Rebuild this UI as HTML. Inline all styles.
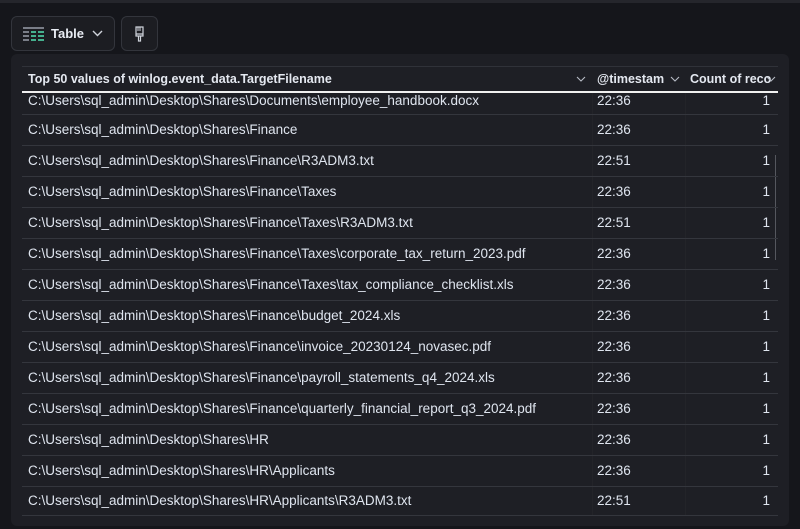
<!DOCTYPE html>
<html><head><meta charset="utf-8"><style>
*{box-sizing:border-box;margin:0;padding:0}
body{width:800px;height:529px;background:#15161b;font-family:"Liberation Sans",sans-serif;color:#dfe5ef;overflow:hidden;position:relative}
.topline{position:absolute;left:0;top:0;width:800px;height:3px;background:#25262c}
.btn{position:absolute;top:16px;height:35px;border:1px solid #33353c;border-radius:6px;background:#1c1d22}
.b1{left:11px;width:104px}
.b2{left:121px;width:37px}
.panel{position:absolute;left:11px;top:54px;width:778px;height:472px;background:#1e1f25;border-radius:6px}
.hd{position:absolute;top:66px;height:27px;border-top:1px solid #303239;border-bottom:2px solid #f0f0f0;left:22px;width:756px;font-weight:bold;font-size:12.5px;color:#e4e8f0}
.hd span{position:absolute;top:5px}
.hd svg{position:absolute;top:9px}
.row{position:absolute;left:22px;width:756px;border-bottom:1px solid #34363d;font-size:13.5px;color:#dfe5ef}
.row span{position:absolute}
.vl{position:absolute;top:93px;height:422px;width:1px;background:#232429}
</style></head><body>
<div class="topline"></div>
<div class="btn b1">
<svg style="position:absolute;left:11px;top:10px" width="21" height="14" viewBox="0 0 21 14">
<rect x="0" y="0" width="21" height="2" fill="#7a7e88"/>
<g fill="#7a7e88"><rect x="0" y="4" width="6" height="2"/><rect x="0" y="8" width="6" height="2"/><rect x="0" y="12" width="6" height="2"/></g>
<g fill="#45b08e"><rect x="8" y="4" width="5" height="2"/><rect x="15" y="4" width="6" height="2"/><rect x="8" y="8" width="5" height="2"/><rect x="15" y="8" width="6" height="2"/><rect x="8" y="12" width="5" height="2"/><rect x="15" y="12" width="6" height="2"/></g>
</svg>
<span style="position:absolute;left:39px;top:9px;font-weight:bold;font-size:13px;color:#e8ecf3">Table</span>
<svg style="position:absolute;left:80px;top:13px" width="11" height="7" viewBox="0 0 11 7"><path d="M1 1 L5.5 5.5 L10 1" stroke="#d0d4dc" stroke-width="1.4" fill="none"/></svg>
</div>
<div class="btn b2">
<svg style="position:absolute;left:12px;top:9px" width="11" height="16" viewBox="0 0 11 16"><path d="M2 1 H9 V8 H2 Z M2 8 H9 V10 H2 Z M4.5 10 V15 H6.5 V10" stroke="#d0d4dc" stroke-width="1.2" fill="none"/><path d="M4 1 V5 M6 1 V5" stroke="#d0d4dc" stroke-width="1"/></svg>
</div>
<div class="panel"></div>
<div class="hd">
<span style="left:6px">Top 50 values of winlog.event_data.TargetFilename</span>
<svg style="left:554px" width="10" height="6" viewBox="0 0 10 6"><path d="M1 1 L5 5 L9 1" stroke="#b8bcc6" stroke-width="1.1" fill="none"/></svg>
<span style="left:575px">@timestam</span>
<svg style="left:648px" width="10" height="6" viewBox="0 0 10 6"><path d="M1 1 L5 5 L9 1" stroke="#b8bcc6" stroke-width="1.1" fill="none"/></svg>
<span style="left:668px;width:82px;overflow:hidden;white-space:nowrap">Count of records</span>
<svg style="left:744px" width="10" height="6" viewBox="0 0 10 6"><path d="M1 1 L5 5 L9 1" stroke="#b8bcc6" stroke-width="1.1" fill="none"/></svg>
</div>
<div class="vl" style="left:592px"></div>
<div class="vl" style="left:685px"></div>
<div style="position:absolute;left:775px;top:155px;width:1px;height:105px;background:#55575e"></div>
<div class="row" style="top:93px;height:22px"><span style="left:6px;top:0">C:\Users\sql_admin\Desktop\Shares\Documents\employee_handbook.docx</span><span style="left:575px;top:0">22:36</span><span style="right:8px;top:0">1</span></div>
<div class="row" style="top:115px;height:31px"><span style="left:6px;top:7px">C:\Users\sql_admin\Desktop\Shares\Finance</span><span style="left:575px;top:7px">22:36</span><span style="right:8px;top:7px">1</span></div>
<div class="row" style="top:146px;height:31px"><span style="left:6px;top:7px">C:\Users\sql_admin\Desktop\Shares\Finance\R3ADM3.txt</span><span style="left:575px;top:7px">22:51</span><span style="right:8px;top:7px">1</span></div>
<div class="row" style="top:177px;height:31px"><span style="left:6px;top:7px">C:\Users\sql_admin\Desktop\Shares\Finance\Taxes</span><span style="left:575px;top:7px">22:36</span><span style="right:8px;top:7px">1</span></div>
<div class="row" style="top:208px;height:31px"><span style="left:6px;top:7px">C:\Users\sql_admin\Desktop\Shares\Finance\Taxes\R3ADM3.txt</span><span style="left:575px;top:7px">22:51</span><span style="right:8px;top:7px">1</span></div>
<div class="row" style="top:239px;height:31px"><span style="left:6px;top:7px">C:\Users\sql_admin\Desktop\Shares\Finance\Taxes\corporate_tax_return_2023.pdf</span><span style="left:575px;top:7px">22:36</span><span style="right:8px;top:7px">1</span></div>
<div class="row" style="top:270px;height:31px"><span style="left:6px;top:7px">C:\Users\sql_admin\Desktop\Shares\Finance\Taxes\tax_compliance_checklist.xls</span><span style="left:575px;top:7px">22:36</span><span style="right:8px;top:7px">1</span></div>
<div class="row" style="top:301px;height:31px"><span style="left:6px;top:7px">C:\Users\sql_admin\Desktop\Shares\Finance\budget_2024.xls</span><span style="left:575px;top:7px">22:36</span><span style="right:8px;top:7px">1</span></div>
<div class="row" style="top:332px;height:31px"><span style="left:6px;top:7px">C:\Users\sql_admin\Desktop\Shares\Finance\invoice_20230124_novasec.pdf</span><span style="left:575px;top:7px">22:36</span><span style="right:8px;top:7px">1</span></div>
<div class="row" style="top:363px;height:31px"><span style="left:6px;top:7px">C:\Users\sql_admin\Desktop\Shares\Finance\payroll_statements_q4_2024.xls</span><span style="left:575px;top:7px">22:36</span><span style="right:8px;top:7px">1</span></div>
<div class="row" style="top:394px;height:31px"><span style="left:6px;top:7px">C:\Users\sql_admin\Desktop\Shares\Finance\quarterly_financial_report_q3_2024.pdf</span><span style="left:575px;top:7px">22:36</span><span style="right:8px;top:7px">1</span></div>
<div class="row" style="top:425px;height:31px"><span style="left:6px;top:7px">C:\Users\sql_admin\Desktop\Shares\HR</span><span style="left:575px;top:7px">22:36</span><span style="right:8px;top:7px">1</span></div>
<div class="row" style="top:456px;height:31px"><span style="left:6px;top:7px">C:\Users\sql_admin\Desktop\Shares\HR\Applicants</span><span style="left:575px;top:7px">22:36</span><span style="right:8px;top:7px">1</span></div>
<div class="row" style="top:487px;height:29px"><span style="left:6px;top:6px">C:\Users\sql_admin\Desktop\Shares\HR\Applicants\R3ADM3.txt</span><span style="left:575px;top:6px">22:51</span><span style="right:8px;top:6px">1</span></div>
</body></html>
